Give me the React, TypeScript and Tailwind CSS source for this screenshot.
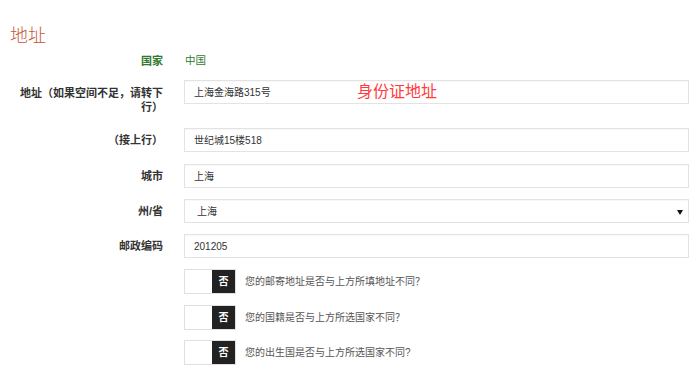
import React from "react";

const FONT = { fontFamily: '"Liberation Sans", "Noto Sans CJK SC", sans-serif' };

function Label({ children, extra = "" }: { children: React.ReactNode; extra?: string }) {
  return (
    <div className={`ml-[18px] w-[145px] shrink-0 text-right text-[11px] leading-[14px] font-semibold ${extra}`}>
      {children}
    </div>
  );
}

function Box({ children }: { children?: React.ReactNode }) {
  return (
    <div className="ml-[21px] w-[505px] h-[24px] border border-[#e3e3e3] bg-white flex items-center pl-[9px] text-[10px] text-[#333] shadow-[inset_0_1px_1px_rgba(0,0,0,0.03)] relative">
      {children}
    </div>
  );
}

function Toggle({ text, mt }: { text: string; mt: string }) {
  return (
    <div className={`flex items-center ${mt}`}>
      <div className="ml-[184px] flex h-[25px] border border-[#e0e0e0] bg-white">
        <div className="w-[27px]" />
        <div className="w-[23px] bg-[#222] text-white text-[10px] font-bold flex items-center justify-center">否</div>
      </div>
      <div className="ml-[9px] text-[10px] text-[#555] leading-[14px]">{text}</div>
    </div>
  );
}

export default function App() {
  return (
    <div className="w-[700px] h-[377px] bg-white overflow-hidden" style={FONT}>
      <div className="pt-[24px] pl-[10px] text-[18px] leading-[24px] font-light text-[#c4583a]">地址</div>

      <div className="flex items-center mt-[5px] h-[16px]">
        <Label extra="text-[#2f7a32]">国家</Label>
        <div className="ml-[22px] text-[10.5px] text-[#2f7a32]">中国</div>
      </div>

      <div className="flex items-start mt-[11px]">
        <Label extra="pt-[6px] text-[#333]">
          地址（如果空间不足，请转下行）
        </Label>
        <Box>
          上海金海路315号
          <div className="absolute left-[172px] top-0 bottom-0 flex items-center text-[16px] text-[#ff3b3b] font-normal">
            身份证地址
          </div>
        </Box>
      </div>

      <div className="flex items-center mt-[14px]">
        <Label extra="text-[#333]">（接上行）</Label>
        <Box>世纪城15楼518</Box>
      </div>

      <div className="flex items-center mt-[12px]">
        <Label extra="text-[#333]">城市</Label>
        <Box>上海</Box>
      </div>

      <div className="flex items-center mt-[11px]">
        <Label extra="text-[#333]">州/省</Label>
        <Box>
          <span className="pl-[3px]">上海</span>
          <svg className="absolute right-[5px] top-[10px]" width="6" height="5" viewBox="0 0 6 5">
            <polygon points="0,0 6,0 3,5" fill="#111" />
          </svg>
        </Box>
      </div>

      <div className="flex items-center mt-[11px]">
        <Label extra="text-[#333]">邮政编码</Label>
        <Box>201205</Box>
      </div>

      <Toggle mt="mt-[11px]" text="您的邮寄地址是否与上方所填地址不同？" />
      <Toggle mt="mt-[11px]" text="您的国籍是否与上方所选国家不同？" />
      <Toggle mt="mt-[10px]" text="您的出生国是否与上方所选国家不同?" />
    </div>
  );
}
